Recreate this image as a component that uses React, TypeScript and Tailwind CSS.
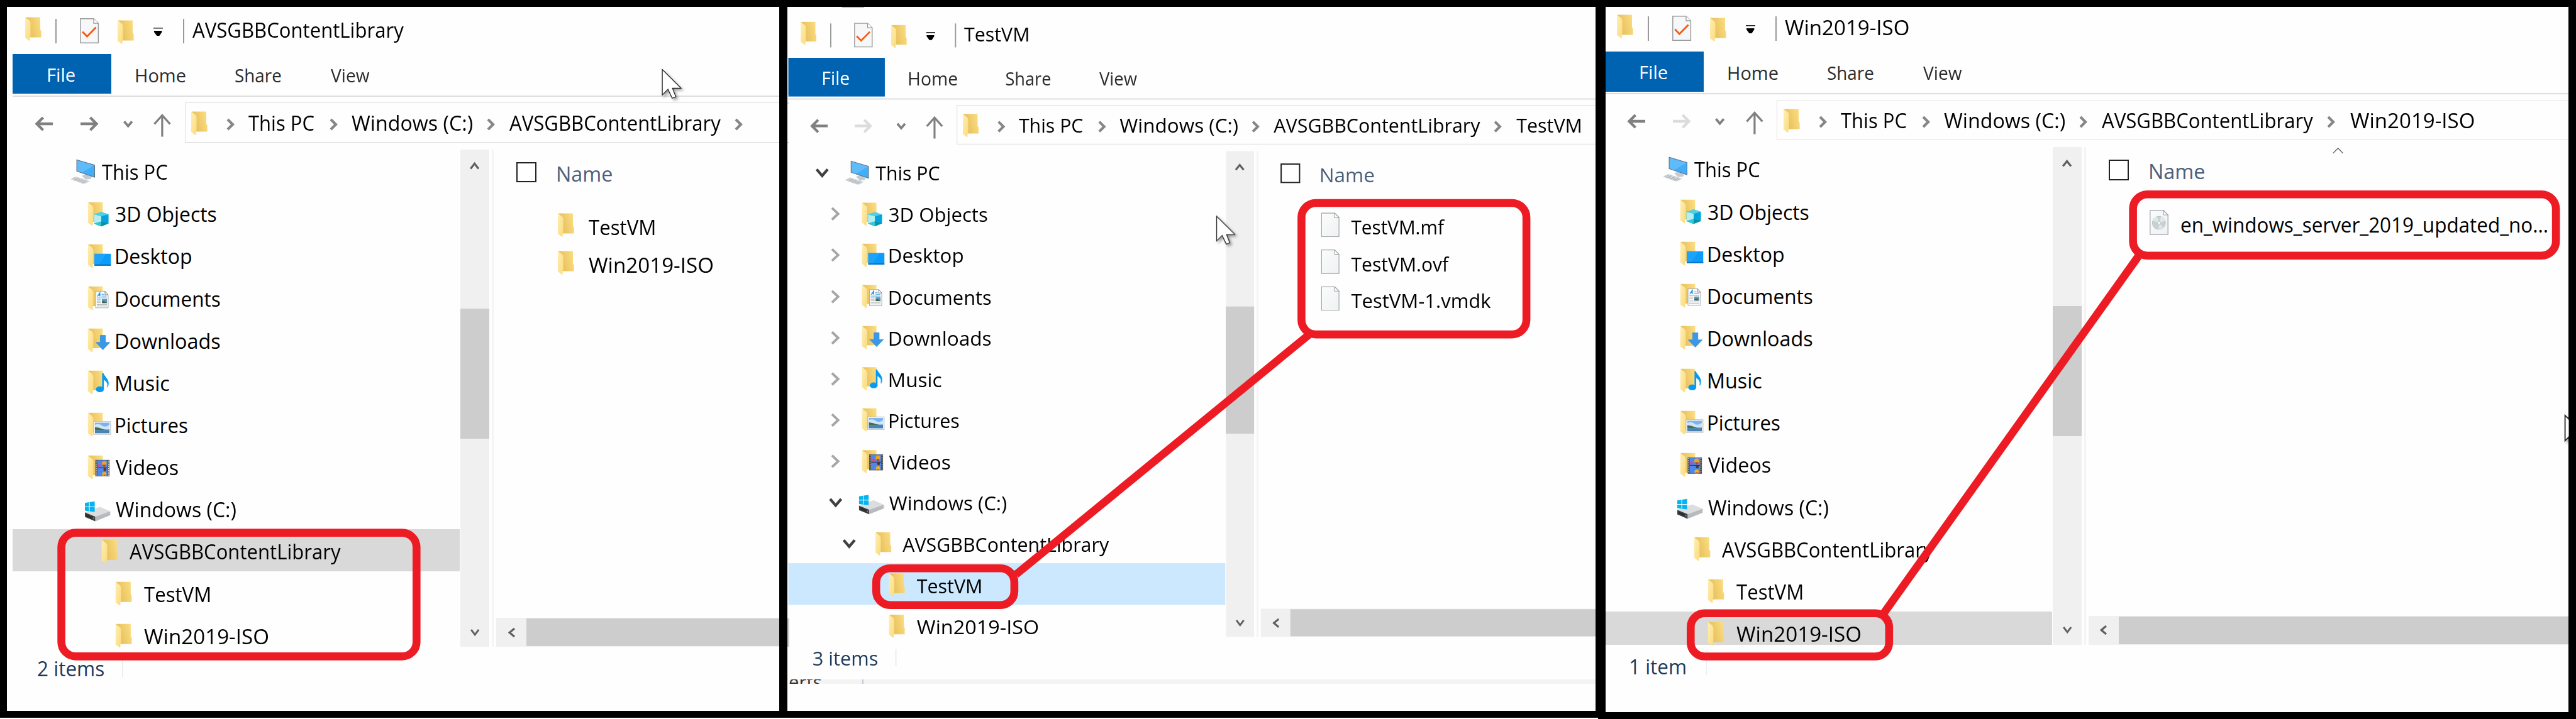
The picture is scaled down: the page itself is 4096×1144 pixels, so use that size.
import React from "react";
import { clsx } from "clsx";

const FONT = '"Open Sans", "Noto Sans", sans-serif';

let measurer: CanvasRenderingContext2D | null = null;

/* Sets a label so that its ink spans exactly `w` pixels. */
function Label({ text, w, size = 32, className }: { text: string; w: number; size?: number; className?: string }) {
  measurer = measurer ?? document.createElement("canvas").getContext("2d");
  let transform = "none";
  if (measurer) {
    measurer.font = `${size}px ${FONT}`;
    const m = measurer.measureText(text);
    const ratio = w / (m.actualBoundingBoxLeft + m.actualBoundingBoxRight);
    transform = `translateX(${m.actualBoundingBoxLeft * ratio}px) scaleX(${ratio})`;
  }
  return (
    <span className={clsx("block h-10 shrink-0 leading-10 whitespace-nowrap", className)} style={{ width: w, fontSize: size }}>
      <span className="inline-block origin-left" style={{ transform }}>
        {text}
      </span>
    </span>
  );
}

/* ---------- icons ---------- */

function FolderShape({ bump = true }: { bump?: boolean }) {
  return (
    <g>
      <path d={bump ? "M0.8 0.4H24V20.3L25.6 22V32.4H7Z" : "M0.8 0.4H23.6V31.6H7Z"} fill="url(#folderBack)" />
      <path d="M0 0.4L6.8 5.6Q8.6 7.2 8.6 10V28Q8.6 32 7.6 33V37.2Q7.4 38.4 6.2 37.6L0 33Z" fill="url(#folderFlap)" />
    </g>
  );
}

function Folder({ className }: { className?: string }) {
  return (
    <svg viewBox="0 0 26 38" className={clsx("h-[38px] w-[26px] shrink-0", className)}>
      <FolderShape />
    </svg>
  );
}

function TaskDoc() {
  return (
    <svg viewBox="0 0 30 40" className="h-10 w-[30px] shrink-0 overflow-visible">
      <path d="M0.8 0.8H22L29.4 8V39.2H0.8Z" fill="#f6f7f8" stroke="#9a9a9a" strokeWidth="1.4" />
      <path d="M22 0.8V8H29.4" fill="#fff" stroke="#9a9a9a" strokeWidth="1.3" />
      <path d="M4.2 21.6L11.4 29L25.6 14.6" fill="none" stroke="#f9570f" strokeWidth="2.8" />
    </svg>
  );
}

function FileDoc({ disc }: { disc?: boolean }) {
  return (
    <svg viewBox="0 0 30 40" className="h-10 w-[30px] shrink-0">
      <path d="M0.8 0.8H22L29.2 8V39.2H0.8Z" fill="url(#paper)" stroke="#a3a7a9" strokeWidth="1.3" />
      <path d="M22 0.8V8H29.2Z" fill="#fff" stroke="#a3a7a9" strokeWidth="1.2" />
      {disc && (
        <g>
          <circle cx="14.8" cy="20.6" r="10.4" fill="#c9d0d1" stroke="#b4babc" strokeWidth="0.8" />
          <path d="M14.8 20.6L5 17A10.4 10.4 0 0 1 12 10.6Z" fill="#d9ece2" />
          <path d="M14.8 20.6L18 10.8A10.4 10.4 0 0 1 24.6 17.6Z" fill="#e4e7ea" />
          <path d="M14.8 20.6L22 28A10.4 10.4 0 0 1 14 31Z" fill="#dfe3e4" />
          <circle cx="14.8" cy="20.6" r="2.6" fill="#f7f9f9" stroke="#b0b6b8" strokeWidth="0.8" />
        </g>
      )}
    </svg>
  );
}

type IconName =
  | "pc" | "objects" | "desktop" | "documents" | "downloads" | "music" | "pictures" | "videos" | "drive" | "folder";

const overlays: Partial<Record<IconName, React.ReactNode>> = {
  objects: (
    <g>
      <path d="M14.7 20L26 16.3L37.4 20V34.8L26 39.2L14.7 34.8Z" fill="#19b7cb" />
      <path d="M14.7 20L26 23V36L14.7 34.8Z" fill="#b5eef2" />
      <path d="M26 23L37.4 20V34.8L26 32Z" fill="#04a3df" />
      <path d="M14.7 20L26 16.3L37.4 20L26 23Z" fill="#4fd0e4" />
      <path d="M14.7 34.8L26 31.4L37.4 34.8L26 39.2Z" fill="#0c8f9f" />
      <path d="M14.7 34.8L26 31.4V39.2Z" fill="#2fc9d6" />
    </g>
  ),
  desktop: (
    <g>
      <rect x="15" y="15.8" width="26.3" height="19" fill="#0a9bfb" />
      <path d="M15 15.8H34L21 34.8H15Z" fill="#2fabfb" opacity="0.5" />
      <rect x="15" y="32.6" width="26.3" height="2.2" fill="#0b74c4" />
    </g>
  ),
  documents: (
    <g>
      <path d="M17 8.4H32L37 14V34.8H17Z" fill="#f8f9fa" stroke="#a8acb0" strokeWidth="1" />
      <path d="M32 8.4V14H37Z" fill="#fff" stroke="#777" strokeWidth="0.9" />
      <path d="M20 16.6L23.8 11V16.6M21.4 14.6H24" fill="none" stroke="#1f9be6" strokeWidth="1.5" />
      <path d="M26.5 13.4H30.5M26.5 16.2H34.4M19 19H35" stroke="#63b7e8" strokeWidth="1.2" />
      <path d="M19 21.8H25.4M19 24.2H25.4M19 26.6H25.4M19 29.4H35M19 31.8H35" stroke="#b3b7ba" strokeWidth="1" />
      <rect x="27" y="20.8" width="8" height="6.4" fill="#6f93b8" />
      <path d="M27 25L30 23.6L35 26.4V27.2H27Z" fill="#3f6b52" />
    </g>
  ),
  downloads: <path d="M24.4 11.6H32.8V22.8H39.8L28.7 34.4L17.4 22.8H24.4Z" fill="#3a98e8" stroke="#2f86d6" strokeWidth="0.7" />,
  music: (
    <g fill="#059bf5">
      <ellipse cx="23.8" cy="30.4" rx="6.3" ry="4.7" />
      <path d="M27.4 4.5H29.4C31.4 11 41.6 15.6 36.4 27.2H35.2C37 20 33.6 17.4 30.1 15.4V30.4H27.4Z" />
    </g>
  ),
  pictures: (
    <g>
      <rect x="13.9" y="14.8" width="27" height="20.4" fill="#f4f5f6" stroke="#b9bcc0" strokeWidth="1" />
      <rect x="16" y="16.6" width="23" height="16.6" fill="#76b4f5" />
      <path d="M16 20Q22 17 27 21T39 20V27H16Z" fill="#cfe4f8" />
      <path d="M16 23.6Q22 24 28 26.4T39 27.4V28.6H16Z" fill="#44704d" />
      <rect x="16" y="28.4" width="23" height="4.8" fill="#4b83b0" />
    </g>
  ),
  videos: (
    <g>
      <rect x="16.5" y="7.8" width="22.6" height="26" fill="#4b4b4d" />
      <rect x="19.6" y="8.4" width="16.4" height="24.8" fill="#4e86ea" />
      <path d="M18 9V33M37.6 9V33" stroke="#e8e8e8" strokeWidth="1.3" strokeDasharray="1.4 1.5" />
      <circle cx="30.8" cy="13.4" r="3.8" fill="#e9a51d" />
      <path d="M28 15.4H33.6L31.6 18.8H30Z" fill="#c0392b" />
      <path d="M20 16.4Q23 12 26 18L20 19Z" fill="#d04a8e" />
      <path d="M19.6 20.4H36" stroke="#2f3137" strokeWidth="1.1" />
      <circle cx="31.8" cy="23" r="2.4" fill="#513a2a" />
      <circle cx="30.8" cy="30.4" r="3.4" fill="#efb21d" />
      <path d="M28.4 31.4H33.4L31 33.2Z" fill="#c0392b" />
    </g>
  ),
};

function TreeIcon({ name }: { name: IconName }) {
  return (
    <svg viewBox="0 0 39 39" className="h-[39px] w-[39px] shrink-0 overflow-visible">
      {name === "pc" && (
        <g>
          <path d="M18 25.6L24 23.4L34 27.4L32 31L24 31.6Z" fill="#c4cbd1" />
          <path d="M10.1 0.4L38.4 8.6V28L10.1 18.4Z" fill="#43adf8" stroke="#5b6f80" strokeWidth="1.1" />
          <path d="M10.7 1L38 9L18 20.6L10.7 18Z" fill="#6cc1fb" opacity="0.7" />
          <path d="M8.4 26.8L31.4 34.2L20.8 38.8L0 31.2Z" fill="#d5d9dd" />
          <path d="M5.8 28.6L27 36.2M2.8 30L24 37.6M14 28.8L6.6 33.4M20 30.8L12 35.4M26 32.6L17.6 37.2" stroke="#a9aeb4" strokeWidth="0.8" />
        </g>
      )}
      {name === "drive" && (
        <g>
          <path d="M0 24.2L23.7 15.4L40.3 22.6L16.4 31Z" fill="#dcdddf" />
          <path d="M16.4 31L40.3 22.6V28.8L16.4 38.4Z" fill="#b9babd" />
          <path d="M0 24.2L16.4 31V38.4L0 31.6Z" fill="#3f4143" />
          <path d="M2 27L12 31.4V34.4L2 30.2Z" fill="#2a2b2c" />
          <circle cx="13.6" cy="33.4" r="1" fill="#35d04c" />
          <path d="M0 9.2L6.6 8.1V14.9H0ZM7.6 7.9L15.6 6.8V14.9H7.6ZM0 15.9H6.6V22.4L0 21.6ZM7.6 15.9H15.6V23.6L7.6 22.6Z" fill="#03b4f1" />
        </g>
      )}
      {name !== "pc" && name !== "drive" && (
        <g transform="translate(4.8 0.4)">
          <FolderShape bump={name === "folder"} />
        </g>
      )}
      {overlays[name]}
    </svg>
  );
}

function Arrow({ d, w, h, stroke, width, className }: { d: string; w: number; h: number; stroke: string; width: number; className?: string }) {
  return (
    <svg width={w} height={h} viewBox={`0 0 ${w} ${h}`} className={clsx("shrink-0 overflow-visible", className)}>
      <path d={d} fill="none" stroke={stroke} strokeWidth={width} />
    </svg>
  );
}

const CrumbArrow = ({ className }: { className?: string }) => (
  <Arrow d="M2 1L10 9L2 17" w={13} h={18} stroke="#868686" width={4.2} className={clsx("translate-y-0.5", className)} />
);

/* ---------- navigation tree ---------- */

type Node = { label: string; w: number; icon: IconName; level: 0 | 1 | 2 | 3; dx?: number; arrow: "open" | "closed" | "none" };

const NODES: Node[] = [
  { label: "This PC", w: 104.5, icon: "pc", level: 0, arrow: "open" },
  { label: "3D Objects", w: 159.5, icon: "objects", level: 1, arrow: "closed" },
  { label: "Desktop", w: 119, icon: "desktop", level: 1, dx: 1, arrow: "closed" },
  { label: "Documents", w: 164.5, icon: "documents", level: 1, dx: 1, arrow: "closed" },
  { label: "Downloads", w: 164.5, icon: "downloads", level: 1, dx: 1, arrow: "closed" },
  { label: "Music", w: 84.5, icon: "music", level: 1, dx: 1, arrow: "closed" },
  { label: "Pictures", w: 112.5, icon: "pictures", level: 1, dx: 1, arrow: "closed" },
  { label: "Videos", w: 99, icon: "videos", level: 1, arrow: "closed" },
  { label: "Windows (C:)", w: 191.5, icon: "drive", level: 1, arrow: "open" },
  { label: "AVSGBBContentLibrary", w: 336.5, icon: "folder", level: 2, arrow: "open" },
  { label: "TestVM", w: 104.5, icon: "folder", level: 3, arrow: "none" },
  { label: "Win2019-ISO", w: 197, icon: "folder", level: 3, arrow: "none" },
];

const INDENT = ["pl-[43.5px]", "pl-[65.7px]", "pl-[87.9px]", "pl-[110.1px]"];

function Tree({ selected, selectedClass, arrows }: { selected: string; selectedClass: string; arrows: boolean }) {
  return (
    <div className="ml-[20.3px] h-[791.4px] w-[710.7px] shrink-0">
      {NODES.map((n, i) => (
        <div
          key={n.label}
          className={clsx(
            "flex items-center",
            i === NODES.length - 1 ? "h-[52.7px] pt-[17.5px]" : "h-[67.15px] pt-[3px]",
            INDENT[n.level],
            n.label === selected && selectedClass,
          )}
        >
          <div className="mr-[26.7px] flex w-[22px] shrink-0 justify-center">
            {arrows && n.arrow === "open" && <Arrow d="M2 1.5L11 12L20 1.5" w={22} h={14} stroke="#404040" width={4.4} />}
            {arrows && n.arrow === "closed" && <Arrow d="M2 1.5L12 11L2 20.5" w={15} h={22} stroke="#a6a6a6" width={4} />}
          </div>
          <TreeIcon name={n.icon} />
          <Label text={n.label} w={n.w} className={clsx("translate-y-px", n.dx ? "ml-[11.4px]" : "ml-[10.6px]")} />
        </div>
      ))}
    </div>
  );
}

/* ---------- explorer window ---------- */

type Item = { label: string; w: number; kind: "folder" | "file" | "iso" };

type ExplorerProps = {
  title: [string, number];
  crumb?: [string, number];
  forward: boolean;
  selected: string;
  selectedClass: string;
  arrows?: boolean;
  items: Item[];
  sorted?: boolean;
  status: [string, number];
  statusGap: string;
  className: string;
};

function Explorer(p: ExplorerProps) {
  return (
    <div className={clsx("flex h-[1120px] w-[1600px] flex-col", p.className)}>
      <div className="flex h-[86px] shrink-0 items-center pt-3 pl-[39.6px]">
        <Folder className="-translate-y-[3px]" />
        <div className="ml-[22.4px] h-[39px] w-0.5 bg-[#9a9a9a]" />
        <div className="ml-[37px]">
          <TaskDoc />
        </div>
        <Folder className="ml-[30px] translate-y-[2px]" />
        <svg viewBox="0 0 15 14" className="ml-[31.4px] h-[14px] w-[15px] translate-y-[1.5px]">
          <path d="M0 1.2H15" stroke="#222" strokeWidth="1.5" />
          <path d="M1 5.6H13.4V7.4L9.4 13.6H5.4L1 7.4Z" fill="#000" />
        </svg>
        <div className="ml-[31.6px] h-[39px] w-0.5 bg-[#9a9a9a]" />
        <Label text={p.title[0]} w={p.title[1]} className="ml-[13.3px] -translate-y-[1.5px]" />
      </div>

      <div className="flex h-[63.4px] shrink-0 items-center pl-[20.2px] text-[#2b2b2b]">
        <div className="flex h-full w-[157px] items-center bg-[#0063b1] pl-[56.3px] text-white">
          <Label text="File" w={43.5} size={29.5} className="translate-y-[0.5px]" />
        </div>
        <Label text="Home" w={78.7} size={29} className="ml-[38.7px] translate-y-[2px]" />
        <Label text="Share" w={72.5} size={29} className="ml-[79.5px] translate-y-[2px]" />
        <Label text="View" w={62} size={29} className="ml-[79.5px] translate-y-[2px]" />
      </div>
      <div className="mt-[2.6px] ml-[20.2px] h-[1.6px] shrink-0 bg-[#dedede]" />

      <div className="mt-[9.9px] flex h-[63.1px] shrink-0">
        <div className="flex w-[293.6px] shrink-0 items-center pt-1 pl-[55.8px]">
          <Arrow d="M12.5 1L2.5 11L12.5 21M2.5 11H28" w={28} h={22} stroke="#808080" width={4.3} />
          <Arrow
            d="M15.5 1L25.5 11L15.5 21M25.5 11H0"
            w={28}
            h={22}
            stroke={p.forward ? "#808080" : "#dcdcdc"}
            width={4.3}
            className="ml-[44.5px]"
          />
          <Arrow d="M1.5 1.2L7.7 8.6L13.9 1.2" w={15.4} h={11} stroke="#808080" width={3.8} className="ml-[39.3px]" />
          <Arrow d="M1.4 16.4L13.9 2.4L26.4 16.4M13.9 2.4V36.5" w={27.8} h={37} stroke="#808080" width={3.2} className="ml-[33.4px] translate-y-[2px]" />
        </div>
        <div className="flex grow items-center border-[1.6px] border-[#dedede] pt-px pl-[9.4px]">
          <Folder />
          <CrumbArrow className="ml-[30.4px]" />
          <Label text="This PC" w={104.8} className="ml-[22px]" />
          <CrumbArrow className="ml-[24px]" />
          <Label text="Windows (C:)" w={192.9} className="ml-[22px]" />
          <CrumbArrow className="ml-[22px]" />
          <Label text="AVSGBBContentLibrary" w={336.8} className="ml-[22.6px]" />
          <CrumbArrow className="ml-[22px]" />
          {p.crumb && <Label text={p.crumb[0]} w={p.crumb[1]} className="ml-[23.2px]" />}
        </div>
      </div>

      <div className="mt-[11.5px] flex h-[791.4px] shrink-0">
        <Tree selected={p.selected} selectedClass={p.selectedClass} arrows={!!p.arrows} />
        <div className="ml-px flex w-[46px] shrink-0 flex-col items-center bg-[#f0f0f0]">
          <Arrow d="M1.2 10.4L7.6 2.4L14 10.4" w={15.2} h={11} stroke="#606060" width={3.2} className="mt-5" />
          <div className="mt-[222px] mb-auto h-[206.5px] w-full bg-[#cdcdcd]" />
          <Arrow d="M1.2 0.8L7.2 8.8L13.2 0.8" w={14.4} h={11} stroke="#606060" width={3} className="mb-[17.7px]" />
        </div>
        <div className="ml-[4.4px] w-[3px] shrink-0 bg-[#f4f4f4]" />
        <div className="flex grow flex-col pl-[4px]">
          <div className="flex h-[92px] shrink-0 items-start pl-[31.3px]">
            <div className="mt-5 h-[32.4px] w-[32.4px] border-[2.2px] border-[#222] bg-white" />
            <Label text="Name" w={86.5} className="mt-[18.9px] ml-[33.6px] text-[#4c607a]" />
            {p.sorted && <Arrow d="M0.8 8.8L8.6 0.8L16.4 8.8" w={17.2} h={9.6} stroke="#6b6b6b" width={1.5} className="mt-[1px] ml-[204px]" />}
          </div>
          {p.items.map((it) => (
            <div key={it.label} className="flex h-[60px] shrink-0 items-center pl-[97.2px]">
              <div className="w-[30px] -translate-y-[2px]">
                {it.kind === "folder" ? <Folder /> : <FileDoc disc={it.kind === "iso"} />}
              </div>
              <Label text={it.label} w={it.w} className="ml-[19.6px] translate-y-[1.5px]" />
            </div>
          ))}
          <div className="mt-auto flex h-[46px] shrink-0 items-center bg-[#f0f0f0]">
            <Arrow d="M10 1L2.2 7.5L10 14" w={11} h={15} stroke="#606060" width={3.2} className="ml-[18.2px]" />
            <div className="ml-[18.2px] h-[44px] grow bg-[#cdcdcd]" />
          </div>
        </div>
      </div>

      <div className="flex h-[68px] shrink-0 items-center pl-[60.3px] text-[#1e395b]">
        <Label text={p.status[0]} w={p.status[1]} className="translate-y-px" />
        <div className={clsx("h-[28px] w-[1.4px] bg-[#ededed]", p.statusGap)} />
      </div>
    </div>
  );
}

/* ---------- marks over the windows ---------- */

const POINTER = "M0.6 0.8V41.4L9.6 32.4L16.4 46.6L22.2 44.4L16.8 30.8L30.4 30.6Z";

function Annotations() {
  return (
    <svg viewBox="0 0 4096 1144" className="pointer-events-none absolute inset-0 h-full w-full">
      <defs>
        <linearGradient id="folderBack" x1="0" y1="0.3" x2="1" y2="0">
          <stop offset="0.2" stopColor="#eac462" />
          <stop offset="1" stopColor="#fddf83" />
        </linearGradient>
        <linearGradient id="folderFlap" x1="0" y1="0" x2="1" y2="1">
          <stop offset="0" stopColor="#ffeeb4" />
          <stop offset="1" stopColor="#fbdb7c" />
        </linearGradient>
        <linearGradient id="paper" x1="0" y1="0" x2="1" y2="1">
          <stop offset="0" stopColor="#fbfcfc" />
          <stop offset="1" stopColor="#eff1f2" />
        </linearGradient>
        <clipPath id="thirdWindow">
          <rect x="2553" y="11" width="1531.5" height="1120" />
        </clipPath>
        <filter id="pointerShadow" x="-30%" y="-30%" width="180%" height="180%">
          <feDropShadow dx="3" dy="3" stdDeviation="2" floodOpacity="0.35" />
        </filter>
      </defs>
      <g fill="none" stroke="#ed1c24" strokeWidth="12.6">
        <rect x="97.6" y="847.6" width="564.7" height="196.8" rx="23" />
        <rect x="1393.2" y="904.3" width="219.7" height="58.4" rx="22" />
        <rect x="2069.4" y="323" width="357.7" height="209.1" rx="23" />
        <path d="M1615.5 914L2082 532" />
        <rect x="2688.3" y="975.8" width="315.5" height="68.7" rx="22" />
        <rect x="3391.6" y="309.2" width="672.5" height="97.6" rx="23" />
        <path d="M2993.7 978L3400 408" />
      </g>
      <g fill="#fff" stroke="#222" strokeWidth="1.3" filter="url(#pointerShadow)">
        <path d={POINTER} transform="translate(1052.5 109.7)" />
        <path d={POINTER} transform="translate(1934 343.2) scale(0.97)" />
      </g>
      <g clipPath="url(#thirdWindow)">
        <path d={POINTER} transform="translate(4078 660)" fill="#fff" stroke="#222" strokeWidth="1.8" filter="url(#pointerShadow)" />
      </g>
    </svg>
  );
}

const PANEL = "relative shrink-0 overflow-hidden bg-[#fefefe]";

export default function App() {
  return (
    <div
      className="relative flex h-[1144px] w-[4096px] items-start overflow-hidden bg-black pt-[11.4px] pl-[11.4px] text-black"
      style={{ fontFamily: FONT }}
    >
      <section className={clsx(PANEL, "h-[1119.5px] w-[1228.1px]")}>
        <Explorer
          title={["AVSGBBContentLibrary", 336.8]}
          forward
          selected="AVSGBBContentLibrary"
          selectedClass="bg-[#d9d9d9]"
          items={[
            { label: "TestVM", w: 104.7, kind: "folder" },
            { label: "Win2019-ISO", w: 197, kind: "folder" },
          ]}
          status={["2 items", 105]}
          statusGap="ml-[29px]"
          className="-mt-[11.4px] -ml-[11.4px]"
        />
      </section>

      <section className={clsx(PANEL, "ml-[12.9px] h-[1119.5px] w-[1285.1px]")}>
        <Explorer
          title={["TestVM", 104.3]}
          crumb={["TestVM", 104.3]}
          forward={false}
          selected="TestVM"
          selectedClass="bg-[#cce8ff]"
          arrows
          items={[
            { label: "TestVM.mf", w: 153, kind: "file" },
            { label: "TestVM.ovf", w: 160.5, kind: "file" },
            { label: "TestVM-1.vmdk", w: 227.6, kind: "file" },
          ]}
          status={["3 items", 105]}
          statusGap="ml-[29px]"
          className="-mt-[3px] -ml-[18.1px] origin-top-left scale-[0.977]"
        />
        {/* sliver of the application behind this window */}
        <div className="absolute top-0 left-[87px] h-[1.6px] w-[35px] bg-[#c9c9c9]" />
        <div className="absolute top-[140.6px] left-0 h-[1.5px] w-[2.6px] bg-[#dedede]" />
        <div className="absolute top-[152px] left-0 h-[1.5px] w-[2.6px] bg-[#dedede]" />
        <div className="absolute top-[215px] left-0 h-[1.5px] w-[2.6px] bg-[#dedede]" />
        <div className="absolute top-[972.6px] left-0 h-[45px] w-[2.6px] bg-[#cdcdcd]" />
        <div className="absolute top-[1069.3px] left-[2.6px] flex h-[7.7px] w-[1283px] items-start overflow-hidden bg-[#f3f3f3] text-[#333]">
          <Label text="erts" w={50.5} size={30} className="-mt-[15.4px]" />
          <div className="ml-[66px] h-full w-[2px] bg-[#c6c6da]" />
        </div>
      </section>

      <section className={clsx(PANEL, "ml-[15.6px] h-[1121.4px] w-[1531.4px]")}>
        <Explorer
          title={["Win2019-ISO", 196.4]}
          crumb={["Win2019-ISO", 196.4]}
          forward={false}
          selected="Win2019-ISO"
          selectedClass="bg-[#d9d9d9]"
          items={[{ label: "en_windows_server_2019_updated_no...", w: 582.6, kind: "iso" }]}
          sorted
          status={["1 item", 88.4]}
          statusGap="ml-[32.5px]"
          className="-mt-[15.1px] -ml-[21.2px]"
        />
      </section>

      <div className="absolute bottom-0 left-0 h-[2px] w-[2541px] bg-white" />
      <Annotations />
    </div>
  );
}
